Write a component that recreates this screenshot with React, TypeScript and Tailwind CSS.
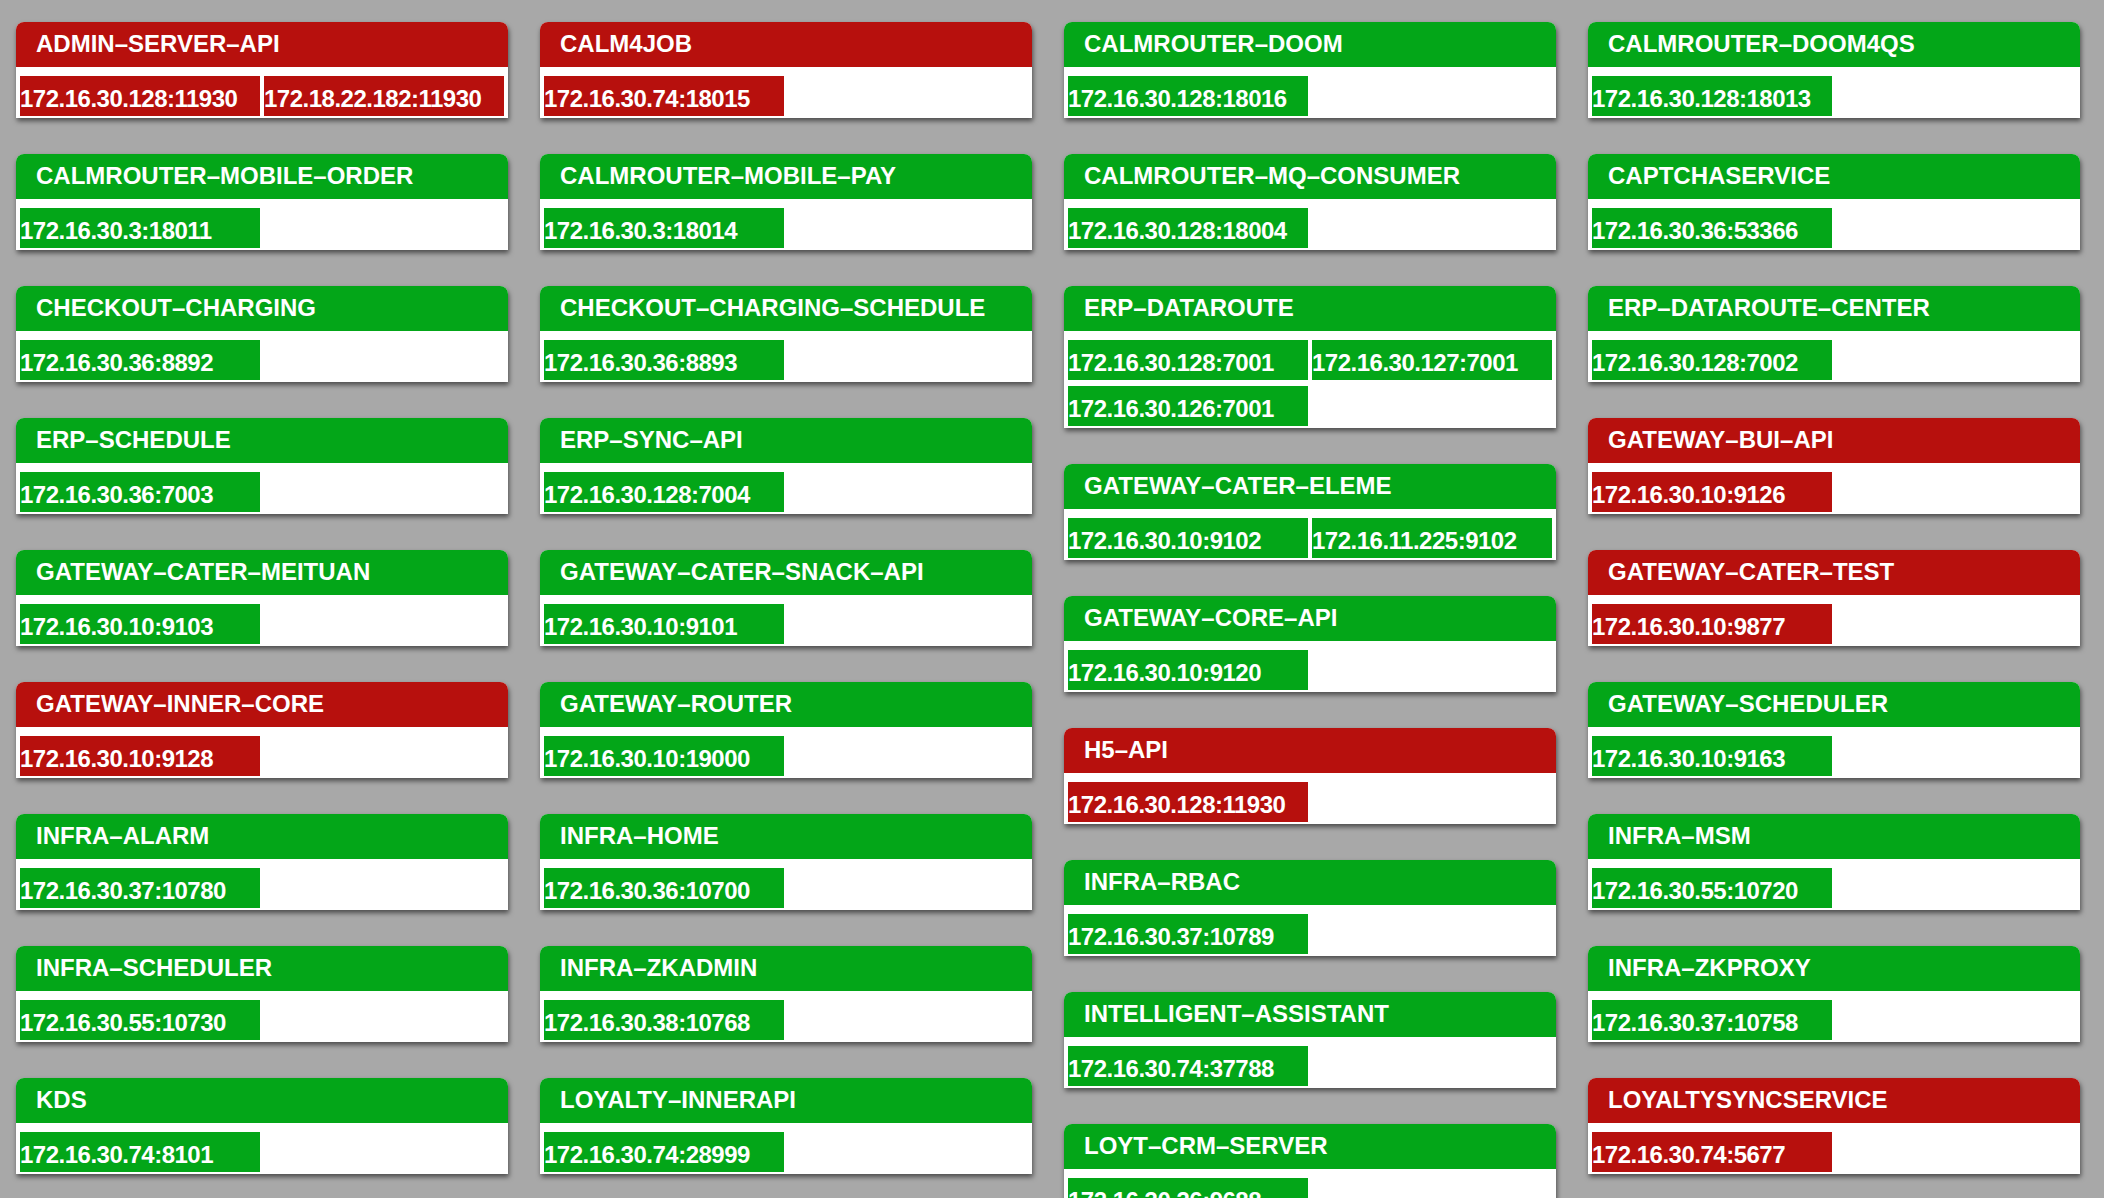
import React from 'react';

type Service = {
  name: string;
  down?: boolean;
  hosts: string[];
};

const columns: Service[][] = [
  [
    { name: 'ADMIN–SERVER–API', down: true, hosts: ['172.16.30.128:11930', '172.18.22.182:11930'] },
    { name: 'CALMROUTER–MOBILE–ORDER', hosts: ['172.16.30.3:18011'] },
    { name: 'CHECKOUT–CHARGING', hosts: ['172.16.30.36:8892'] },
    { name: 'ERP–SCHEDULE', hosts: ['172.16.30.36:7003'] },
    { name: 'GATEWAY–CATER–MEITUAN', hosts: ['172.16.30.10:9103'] },
    { name: 'GATEWAY–INNER–CORE', down: true, hosts: ['172.16.30.10:9128'] },
    { name: 'INFRA–ALARM', hosts: ['172.16.30.37:10780'] },
    { name: 'INFRA–SCHEDULER', hosts: ['172.16.30.55:10730'] },
    { name: 'KDS', hosts: ['172.16.30.74:8101'] },
  ],
  [
    { name: 'CALM4JOB', down: true, hosts: ['172.16.30.74:18015'] },
    { name: 'CALMROUTER–MOBILE–PAY', hosts: ['172.16.30.3:18014'] },
    { name: 'CHECKOUT–CHARGING–SCHEDULE', hosts: ['172.16.30.36:8893'] },
    { name: 'ERP–SYNC–API', hosts: ['172.16.30.128:7004'] },
    { name: 'GATEWAY–CATER–SNACK–API', hosts: ['172.16.30.10:9101'] },
    { name: 'GATEWAY–ROUTER', hosts: ['172.16.30.10:19000'] },
    { name: 'INFRA–HOME', hosts: ['172.16.30.36:10700'] },
    { name: 'INFRA–ZKADMIN', hosts: ['172.16.30.38:10768'] },
    { name: 'LOYALTY–INNERAPI', hosts: ['172.16.30.74:28999'] },
  ],
  [
    { name: 'CALMROUTER–DOOM', hosts: ['172.16.30.128:18016'] },
    { name: 'CALMROUTER–MQ–CONSUMER', hosts: ['172.16.30.128:18004'] },
    { name: 'ERP–DATAROUTE', hosts: ['172.16.30.128:7001', '172.16.30.127:7001', '172.16.30.126:7001'] },
    { name: 'GATEWAY–CATER–ELEME', hosts: ['172.16.30.10:9102', '172.16.11.225:9102'] },
    { name: 'GATEWAY–CORE–API', hosts: ['172.16.30.10:9120'] },
    { name: 'H5–API', down: true, hosts: ['172.16.30.128:11930'] },
    { name: 'INFRA–RBAC', hosts: ['172.16.30.37:10789'] },
    { name: 'INTELLIGENT–ASSISTANT', hosts: ['172.16.30.74:37788'] },
    { name: 'LOYT–CRM–SERVER', hosts: ['172.16.30.36:9688'] },
  ],
  [
    { name: 'CALMROUTER–DOOM4QS', hosts: ['172.16.30.128:18013'] },
    { name: 'CAPTCHASERVICE', hosts: ['172.16.30.36:53366'] },
    { name: 'ERP–DATAROUTE–CENTER', hosts: ['172.16.30.128:7002'] },
    { name: 'GATEWAY–BUI–API', down: true, hosts: ['172.16.30.10:9126'] },
    { name: 'GATEWAY–CATER–TEST', down: true, hosts: ['172.16.30.10:9877'] },
    { name: 'GATEWAY–SCHEDULER', hosts: ['172.16.30.10:9163'] },
    { name: 'INFRA–MSM', hosts: ['172.16.30.55:10720'] },
    { name: 'INFRA–ZKPROXY', hosts: ['172.16.30.37:10758'] },
    { name: 'LOYALTYSYNCSERVICE', down: true, hosts: ['172.16.30.74:5677'] },
  ],
];

const ServiceCard: React.FC<{ service: Service }> = ({ service }) => {
  const color = service.down ? 'bg-[#b7100d]' : 'bg-[#03a618]';
  return (
    <div className="bg-white rounded-t-[8px] shadow-[1px_3px_5px_rgba(0,0,0,0.55)]">
      <div className={`${color} h-[45px] rounded-t-[8px] pl-[20px] pt-[10px] text-[24px] leading-[24px] font-bold text-white`}>
        {service.name}
      </div>
      <div className="grid grid-cols-2 gap-x-[4px] gap-y-[6px] px-[4px] pt-[9px] pb-[2px]">
        {service.hosts.map((host) => (
          <div
            key={host}
            className={`${color} h-[40px] pt-[10px] text-[24px] leading-[26px] tracking-[-0.5px] font-bold text-white whitespace-nowrap overflow-hidden`}
          >
            {host}
          </div>
        ))}
      </div>
    </div>
  );
};

export default function App() {
  return (
    <div className="min-h-screen bg-[#a8a8a8] font-['Liberation_Sans',Arial,sans-serif]">
      <div className="flex items-start gap-[32px] pl-[16px] pt-[22px] pb-[40px]">
        {columns.map((col, i) => (
          <div key={i} className="w-[492px] flex flex-col gap-[36px]">
            {col.map((service) => (
              <ServiceCard key={service.name} service={service} />
            ))}
          </div>
        ))}
      </div>
    </div>
  );
}
